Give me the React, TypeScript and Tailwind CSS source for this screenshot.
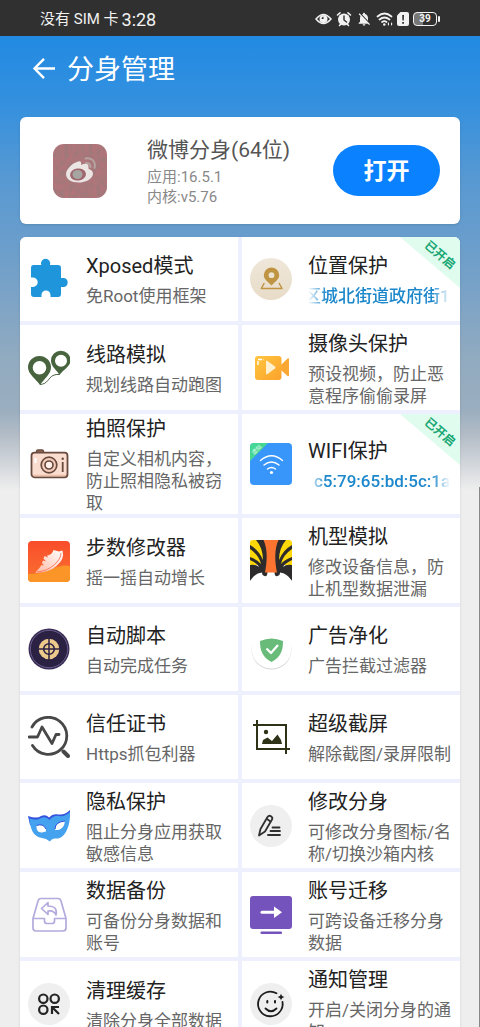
import type { ReactNode } from "react";
import { MdNotificationsOff } from "react-icons/md";

function Art({ children }: { children: ReactNode }) {
  return (
    <svg viewBox="0 0 42 42" className="size-[42px] shrink-0" fill="none" aria-hidden="true">
      {children}
    </svg>
  );
}

const PuzzleArt = () => (
  <Art>
    <path
      fill="#1f96dc"
      d="M5.500 7H13.300A4.600 4.600 0 1 1 21.900 7H30Q33 7 33 10V20H36A4.600 4.600 0 0 1 36 29H33V36Q33 39 30 39H22.500V37A4.500 4.500 0 0 0 13.500 37V39H6Q3 39 3 36V29H5A4.500 4.500 0 0 0 5 19.500H3V10Q3 7 5.500 7Z"
    />
  </Art>
);

const RouteArt = () => (
  <Art>
    <path
      fill="#47643f"
      fillRule="evenodd"
      d="M12 38C8 32 0 27 0 20.500A11.500 11.500 0 0 1 23 20.500C23 27 16 32 12 38ZM11.500 14A6.800 6.800 0 1 0 11.500 27.600A6.800 6.800 0 0 0 11.500 14Z"
    />
    <path
      fill="#47643f"
      fillRule="evenodd"
      d="M31.500 28C29 23 23 20 23 13.500A9.800 9.800 0 0 1 42.600 13.500C42.600 19 35 23 31.500 28ZM33 7.800A6 6 0 1 0 33 19.800A6 6 0 0 0 33 7.800Z"
    />
    <path stroke="#47643f" strokeWidth="1" d="M12 37.500C20 37 20 31 25 28.500Q28 27 31.500 27.500" />
  </Art>
);

const LocationArt = () => (
  <Art>
    <defs>
      <linearGradient id="sand" x1="0" y1="0" x2="0" y2="1">
        <stop offset="0" stopColor="#efe7da" />
        <stop offset="1" stopColor="#e8dcc8" />
      </linearGradient>
    </defs>
    <circle cx="21" cy="21" r="21" fill="url(#sand)" />
    <path
      fill="#bf9544"
      fillRule="evenodd"
      d="M21.500 27.500C18 23.500 13.800 21.500 13.800 17.200A7.700 7.700 0 0 1 29.200 17.200C29.200 21.500 25 23.500 21.500 27.500ZM21.500 14.300A2.900 2.900 0 1 0 21.500 20.100A2.900 2.900 0 0 0 21.500 14.300Z"
    />
    <path stroke="#bf9544" strokeWidth="1.500" strokeLinejoin="round" strokeLinecap="round" d="M14 25.500L11.300 30.500H32L29.300 25.500" />
  </Art>
);

const VideoArt = () => (
  <Art>
    <defs>
      <linearGradient id="amber" x1="0" y1="0" x2="1" y2="1">
        <stop offset="0" stopColor="#ffc53f" />
        <stop offset="1" stopColor="#fba22c" />
      </linearGradient>
    </defs>
    <path fill="#fba733" d="M31 18L37.500 11.500Q39 10.500 39 12.500V28Q39 30 37.500 29L31 23Z" />
    <rect x="5" y="9" width="26.500" height="24" rx="3" fill="url(#amber)" />
    <path fill="#fff0d0" d="M16 14.500Q16 13 17.500 14L25 19.500Q26 20.500 25 21.500L17.500 27Q16 28 16 26.500Z" />
    <path stroke="#fff" strokeWidth="1.400" strokeDasharray="4 1.500" d="M8 18V12.500H14" />
  </Art>
);

const CameraArt = () => (
  <Art>
    <rect x="8.500" y="7" width="7" height="4" rx="1.500" fill="#9b7161" stroke="#694a3e" strokeWidth="1.400" />
    <rect x="3.500" y="9.700" width="36" height="24.600" rx="3" fill="#fbddcf" stroke="#694a3e" strokeWidth="1.800" />
    <path stroke="#eebfa9" strokeWidth="1.500" d="M5 32.500H38" />
    <path stroke="#fff" strokeWidth="2" d="M7.500 15V20" />
    <circle cx="21" cy="22" r="7.800" fill="#f5cdbc" stroke="#694a3e" strokeWidth="1.700" />
    <circle cx="21" cy="22" r="4" fill="#fff1ea" stroke="#694a3e" strokeWidth="1.700" />
    <circle cx="34.700" cy="15.800" r="1.200" fill="#694a3e" />
    <path stroke="#694a3e" strokeWidth="1.800" d="M34.700 19V29" />
  </Art>
);

const WifiArt = () => (
  <Art>
    <defs>
      <clipPath id="wifi-tile">
        <rect width="42" height="42" rx="4" />
      </clipPath>
    </defs>
    <g clipPath="url(#wifi-tile)">
      <rect width="42" height="42" fill="#3896fb" />
      <path fill="#45d794" d="M0 0H18L0 18Z" />
      <text x="0" y="2" fontSize="5.500" fill="#e4fff1" textAnchor="middle" transform="translate(6.500 6.500) rotate(-45)">
        虚拟
      </text>
    </g>
    <circle cx="21.500" cy="29.500" r="1.600" fill="#fff" />
    <path
      stroke="#fff"
      strokeWidth="1.400"
      strokeLinecap="round"
      d="M17.500 26Q21.500 23 25.500 26M14 22Q21.500 16 29 22M10.500 17.500Q21.500 8 32.500 17.500"
    />
  </Art>
);

const ShoeArt = () => (
  <Art>
    <defs>
      <linearGradient id="run" x1="0" y1="0" x2="0" y2="1">
        <stop offset="0" stopColor="#f94d2b" />
        <stop offset="1" stopColor="#fb7230" />
      </linearGradient>
      <linearGradient id="sole" x1="1" y1="0" x2="0" y2="1">
        <stop offset="0" stopColor="#fff" />
        <stop offset="1" stopColor="#ffb9a4" />
      </linearGradient>
    </defs>
    <rect y="1" width="42" height="41" rx="4" fill="url(#run)" />
    <path fill="#fb9528" d="M0 34Q14 34 24 29T42 26V38Q42 42 38 42H4Q0 42 0 38Z" />
    <path
      fill="url(#sole)"
      d="M7.500 32.500C9 30 12 28 13.500 25L16 25.500L14 23L15 20.500L18 21.500L15.500 18.500L16.500 16L20 17.500L19 15.500Q24 15 25.500 10L31 11.500L34.500 10.500Q37 19 28.500 26Q22 32 8 33Z"
    />
    <path stroke="#fa6a48" strokeWidth="0.800" d="M33 13Q33 19 26 25Q19 31 9 32" />
  </Art>
);

const TigerArt = () => (
  <Art>
    <defs>
      <clipPath id="tiger-tile">
        <rect width="42" height="42" rx="3" />
      </clipPath>
    </defs>
    <g clipPath="url(#tiger-tile)">
      <rect width="42" height="42" fill="#fff" />
      <path fill="#ffd80a" d="M0 0H42V25H0Z" />
      <path fill="#2d2b2b" d="M6 0H15C19 10 17 24 17.500 32Q17.500 37 14.500 36Q12 35.500 12 32.500Q5 33 0 41V25Q6 24 9 27Q8 24 0 20V17Q8 20 11 24Q9 15 0 9V5Q9 10 13 20Q13 8 6 0Z" />
      <path fill="#2d2b2b" d="M36 0H27C23 10 25 24 24.500 32Q24.500 37 27.500 36Q30 35.500 30 32.500Q37 33 42 41V25Q36 24 33 27Q34 24 42 20V17Q34 20 31 24Q33 15 42 9V5Q33 10 29 20Q29 8 36 0Z" />
      <path fill="#fc7430" d="M13.500 0H28.500C24 10 25 22 27 32.500H15C17 22 18 10 13.500 0Z" />
    </g>
  </Art>
);

const ScriptArt = () => (
  <Art>
    <circle cx="21" cy="21" r="20.500" fill="#392c55" />
    <circle cx="21" cy="21" r="18.700" fill="#2b2243" stroke="#75679b" strokeWidth="0.800" />
    <circle cx="21" cy="21" r="10.300" fill="#edc98c" />
    <circle cx="21" cy="21" r="5.300" stroke="#2b2243" strokeWidth="1.600" />
    <path stroke="#2b2243" strokeWidth="1.500" d="M21 10V32M10 21H32" />
  </Art>
);

const ShieldArt = () => (
  <Art>
    <circle cx="21.500" cy="21.600" r="20" fill="#d5d5d5" />
    <circle cx="21.500" cy="20.500" r="20" fill="#fff" />
    <path fill="#68bb79" d="M21.500 10.500Q27 10.500 33 13C33 22 31 29 21.500 34C12 29 10 22 10 13Q16 10.500 21.500 10.500Z" />
    <path stroke="#fff" strokeWidth="2.200" strokeLinejoin="round" d="M16.500 20.500L21 25L28 17" />
  </Art>
);

const InspectArt = () => (
  <Art>
    <g stroke="#484848" strokeWidth="2.800" strokeLinecap="round" strokeLinejoin="round">
      <path d="M4 11A18.500 18.500 0 1 1 4.500 29.500" />
      <path d="M1 21H9.500L14 11L24 27.500L28 18.500H31" />
    </g>
    <path stroke="#484848" strokeWidth="4" strokeLinecap="round" d="M35.500 35.500L40 40" />
  </Art>
);

const CropArt = () => (
  <Art>
    <path stroke="#2e3216" strokeWidth="2" d="M7 4V33H40M3 9H36V38" />
    <circle cx="16" cy="16" r="2.200" fill="#2e3216" />
    <path fill="#2e3216" d="M12 28L13 24L17.500 21.500L22 25L27.500 18.500L31 24L32 28Z" />
  </Art>
);

const MaskArt = () => (
  <Art>
    <path fill="#3553dd" d="M0 11Q9 14 13 11Q18 9 21 12.500Q25 8 31 9.500Q37 10 42 5V12L21 20L2 20Z" />
    <path
      fill="#45a2ef"
      fillRule="evenodd"
      d="M1.500 13.500Q9 16 13 13Q18 11 21.500 15Q26 10 31 11Q37 12 42 7C42.500 19 38 34 28 33.500Q24 33 22 36.500Q18 33 14 33C5 32 2 23 1.500 13.500ZM8.500 20.500Q8 28 14 27.500L18 26.500Q18 18 8.500 20.500ZM27 25Q27 17 37 16Q36 24 30 25Z"
    />
    <path stroke="#3553dd" strokeWidth="1" d="M8.500 20.500Q15 18 18 24M27 24Q27 17 37 16" />
  </Art>
);

const BackupArt = () => (
  <Art>
    <g stroke="#b4aadd" strokeWidth="1.700" strokeLinejoin="round">
      <path d="M13 4.500H30Q32.500 4.500 33 7L38 24.500V34Q38 37 35 37H8Q5 37 5 34V24.500L10 7Q10.500 4.500 13 4.500Z" />
      <path d="M5 24.500H16.500V27Q16.500 29.500 19 29.500H24Q26.500 29.500 26.500 27V24.500H38" />
      <path d="M20 8.500L13.500 14.500L20 20.500V17Q26 16 28 21Q30 12 20 12Z" />
    </g>
  </Art>
);

const CacheArt = () => (
  <Art>
    <circle cx="21" cy="21" r="21" fill="#efefef" />
    <g stroke="#242424" strokeWidth="2.200">
      <circle cx="15.300" cy="15.700" r="4.200" />
      <circle cx="26.700" cy="15.700" r="4.200" />
      <circle cx="15.300" cy="26.700" r="4.200" />
      <path d="M31 24H24V31M24.500 24.500L31 31" />
    </g>
  </Art>
);

const EditArt = () => (
  <Art>
    <circle cx="21" cy="21" r="21" fill="#efefef" />
    <g stroke="#303030" strokeWidth="1.800" strokeLinecap="round" strokeLinejoin="round">
      <path d="M9 30.500L10.500 24L17.500 12Q19 10 21 11.200Q23 12.500 22 14.500L15 26.500Z" />
      <path d="M17 14L20.500 16.500" />
      <path d="M22.500 22.500H29.500M20.500 26H30M18 30H30" />
    </g>
  </Art>
);

const MigrateArt = () => (
  <Art>
    <rect y="2" width="42" height="33" rx="3" fill="#7553bd" />
    <rect x="10.500" y="37.500" width="21.500" height="2.500" rx="1" fill="#7553bd" />
    <path stroke="#fff" strokeWidth="3" strokeLinecap="round" d="M12 18.200H25" />
    <path fill="#fff" d="M24 12.500L32 18.200L24 24Z" />
  </Art>
);

const SmileArt = () => (
  <Art>
    <circle cx="21" cy="21" r="21" fill="#efefef" />
    <g stroke="#1d1d1d" strokeWidth="1.800" strokeLinecap="round">
      <path d="M26.500 10.300A12.300 12.300 0 1 0 32.500 19" />
      <path d="M15.500 25.500Q21 31 26.500 25.500" />
      <path strokeWidth="2" d="M17.300 18V19.500M25 18V19.500" />
    </g>
    <path fill="#1d1d1d" d="M31 10.500Q31.500 13.500 34.500 14Q31.500 14.500 31 17.500Q30.500 14.500 27.500 14Q30.500 13.500 31 10.500Z" />
  </Art>
);

type Feature = {
  title: string;
  note: string;
  icon: ReactNode;
  active?: boolean;
  noteClass?: string;
  tall?: boolean;
};

const features: Feature[] = [
  { title: "Xposed模式", note: "免Root使用框架", icon: <PuzzleArt /> },
  { title: "位置保护", note: "区城北街道政府街1号", icon: <LocationArt />, active: true, noteClass: "-indent-1" },
  { title: "线路模拟", note: "规划线路自动跑图", icon: <RouteArt /> },
  { title: "摄像头保护", note: "预设视频，防止恶意程序偷偷录屏", icon: <VideoArt />, tall: true },
  { title: "拍照保护", note: "自定义相机内容，防止照相隐私被窃取", icon: <CameraArt /> },
  { title: "WIFI保护", note: "c5:79:65:bd:5c:1a", icon: <WifiArt />, active: true, noteClass: "indent-1.5" },
  { title: "步数修改器", note: "摇一摇自动增长", icon: <ShoeArt /> },
  { title: "机型模拟", note: "修改设备信息，防止机型数据泄漏", icon: <TigerArt />, tall: true },
  { title: "自动脚本", note: "自动完成任务", icon: <ScriptArt /> },
  { title: "广告净化", note: "广告拦截过滤器", icon: <ShieldArt /> },
  { title: "信任证书", note: "Https抓包利器", icon: <InspectArt /> },
  { title: "超级截屏", note: "解除截图/录屏限制", icon: <CropArt /> },
  { title: "隐私保护", note: "阻止分身应用获取敏感信息", icon: <MaskArt />, tall: true },
  { title: "修改分身", note: "可修改分身图标/名称/切换沙箱内核", icon: <EditArt />, tall: true },
  { title: "数据备份", note: "可备份分身数据和账号", icon: <BackupArt />, tall: true },
  { title: "账号迁移", note: "可跨设备迁移分身数据", icon: <MigrateArt />, tall: true },
  { title: "清理缓存", note: "清除分身全部数据", icon: <CacheArt /> },
  { title: "通知管理", note: "开启/关闭分身的通知", icon: <SmileArt />, tall: true },
];

function Tile({ title, note, icon, active, noteClass = "", tall }: Feature) {
  return (
    <button
      type="button"
      className={`relative flex items-center gap-4 overflow-hidden bg-white pr-1.5 pl-2 text-left ${tall ? "min-h-[85px]" : "min-h-[84px]"}`}
    >
      {icon}
      <span className="flex min-w-0 flex-1 flex-col gap-1">
        <span className="text-[20px] leading-[30px] text-[#222]">{title}</span>
        {active ? (
          <span
            className={`mr-1 overflow-hidden text-[17px] leading-[22px] font-medium whitespace-nowrap text-[#1c88cb] [mask-image:linear-gradient(to_right,transparent,black_18px,black_calc(100%-18px),transparent)] ${noteClass}`}
          >
            {note}
          </span>
        ) : (
          <span className="text-[17px] leading-[22px] text-[#666]">{note}</span>
        )}
      </span>
      {active && (
        <span className="absolute top-0 right-0 h-[51px] w-[60px] bg-[#dffcee] [clip-path:polygon(0_0,100%_0,100%_100%)]">
          <span className="absolute top-2 right-0 w-10 rotate-40 text-center text-[12px] leading-5 font-bold text-[#18a673]">
            已开启
          </span>
        </span>
      )}
    </button>
  );
}

function StatusBar() {
  return (
    <div className="flex h-9 shrink-0 items-center justify-between bg-[#303030] pt-0.5 pr-10 pl-10 text-[#f2f2f2]">
      <div className="flex items-center gap-[3px]">
        <span className="text-[15px]">没有 SIM 卡</span>
        <span className="text-[18px]">3:28</span>
      </div>
      <div className="flex items-center gap-1">
        <svg viewBox="0 0 17 16" className="h-4 w-[17px]" fill="none" aria-hidden="true">
          <path stroke="currentColor" strokeWidth="1.500" d="M1 8Q8.500-1 16 8Q8.500 17 1 8Z" />
          <circle cx="8.500" cy="8" r="4" fill="currentColor" />
          <path fill="#303030" d="M8.500 5.500V8H6.500Q6.500 6 8.500 5.500Z" />
        </svg>
        <svg viewBox="0 0 16 16" className="size-4" fill="none" aria-hidden="true">
          <circle cx="8" cy="8.500" r="6" fill="currentColor" />
          <path stroke="currentColor" strokeWidth="1.600" strokeLinecap="round" d="M1.500 4L4 1.800M14.500 4L12 1.800M3.500 14.500L5 13M12.500 14.500L11 13" />
          <path stroke="#303030" strokeWidth="1.400" strokeLinecap="round" d="M8 5V9L10.500 11" />
        </svg>
        <MdNotificationsOff className="size-4" />
        <svg viewBox="0 0 17 16" className="h-4 w-[17px]" fill="none" aria-hidden="true">
          <path stroke="currentColor" strokeWidth="1.700" strokeLinecap="round" d="M1.500 5.500Q8.500-0.500 15.500 5.500M3.500 8.500Q8.500 4.500 13.500 8.500M6 11Q8.500 9.300 10.500 11" />
          <circle cx="8.300" cy="13.500" r="1.300" fill="currentColor" />
          <path fill="currentColor" d="M11.500 13L13 11V15ZM16.500 13L15 11V15Z" />
        </svg>
        <svg viewBox="0 0 12 16" className="h-4 w-3" aria-hidden="true">
          <path fill="currentColor" d="M3.500 1H10Q12 1 12 3V13Q12 15 10 15H2Q0 15 0 13V4.500Z" />
          <path fill="#303030" d="M5.200 4H7L6.800 9.500H5.400ZM5.200 11H7V12.800H5.200Z" />
        </svg>
        <div className="flex items-center gap-px">
          <span className="flex h-[14px] w-6 items-center justify-center rounded-[4px] border border-current bg-[linear-gradient(to_right,#777_39%,transparent_39%)] text-[10px] leading-none font-bold">
            39
          </span>
          <span className="h-1.5 w-0.5 rounded-sm bg-current" />
        </div>
      </div>
    </div>
  );
}

function AppIcon() {
  return (
    <svg viewBox="0 0 54 54" className="size-[54px] shrink-0" fill="none" aria-hidden="true">
      <defs>
        <filter id="leather" x="0" y="0" width="1" height="1">
          <feTurbulence type="fractalNoise" baseFrequency="0.25 0.15" numOctaves="2" seed="4" />
          <feColorMatrix values="0 0 0 0 0.3 0 0 0 0 0.2 0 0 0 0 0.2 1.4 0 0 0 -0.4" />
          <feComposite in2="SourceGraphic" operator="in" result="grain" />
          <feMerge>
            <feMergeNode in="SourceGraphic" />
            <feMergeNode in="grain" />
          </feMerge>
        </filter>
      </defs>
      <rect width="54" height="54" rx="11" fill="#b1747a" filter="url(#leather)" />
      <path
        fill="#ebe5e3"
        d="M24 18C27 16 29 18 28 21C32 19 36 19 35.500 23C35.500 24 35 25 37 25.500C44 29 38 38.500 26 38.500C18 38.500 13 35 13 30C13 26 19 19 24 18Z"
      />
      <ellipse cx="25" cy="30.500" rx="8" ry="6" fill="#a0666e" transform="rotate(-8 25 30.500)" />
      <ellipse cx="24.500" cy="30.500" rx="5" ry="4.500" fill="#a5a5a2" />
      <path stroke="#b5a3a2" strokeWidth="2" strokeLinecap="round" d="M32.500 14.500C39 13 43 18 41.500 24M33 19Q37.500 18.500 37.500 23" />
    </svg>
  );
}

export default function App() {
  return (
    <div className="relative flex h-screen flex-col overflow-hidden bg-[#eee] font-[Roboto,'Noto_Sans_CJK_SC',sans-serif]">
      <StatusBar />
      <main className="min-h-0 flex-1 overflow-y-auto bg-[linear-gradient(to_bottom,#228ae2_0px,#3390df_64px,#5899d2_144px,#6f9fca_224px,#92abc0_324px,#9aaebf_374px,#b4bdc7_400px,#eeeeee_454px)] bg-no-repeat px-5 pb-5 [scrollbar-width:none]">
        <header className="flex h-[68px] items-center gap-2.5 pl-3 text-white">
          <button type="button" aria-label="返回">
            <svg viewBox="0 0 25 25" className="size-[25px]" fill="none" aria-hidden="true">
              <path stroke="currentColor" strokeWidth="2.400" d="M23 10.500H3M12 0.800L2.500 10.500L12 20.200" />
            </svg>
          </button>
          <h1 className="text-[27px] leading-9">分身管理</h1>
        </header>

        <section className="mt-[13px] flex min-h-[107px] items-center rounded-md bg-white pr-5 pl-[33px] shadow-sm">
          <AppIcon />
          <div className="ml-10 flex-1 pt-0.5">
            <h2 className="mb-[3px] text-[21px] leading-7 text-[#555]">微博分身(64位)</h2>
            <p className="text-[15px] leading-5 text-[#888]">应用:16.5.1</p>
            <p className="text-[15px] leading-5 text-[#888]">内核:v5.76</p>
          </div>
          <button type="button" className="h-[51px] w-[107px] rounded-full bg-[#0a82ff] pt-1 text-[23px] font-bold text-white">
            打开
          </button>
        </section>

        <section className="mt-[13px] grid grid-cols-2 gap-1 overflow-hidden rounded-md bg-[#eef1fd] shadow-sm">
          {features.map((f) => (
            <Tile key={f.title} {...f} />
          ))}
        </section>
      </main>
      <div className="absolute right-0 bottom-0 h-[540px] w-px bg-[#888]" />
    </div>
  );
}
